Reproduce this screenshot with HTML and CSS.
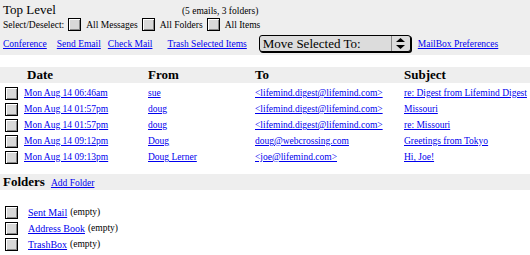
FILE: index.html
```html
<!DOCTYPE html>
<html lang="en">
<head>
    <meta charset="UTF-8">
    <title>Top Level</title>
    <link rel="stylesheet" href="styles.css">
</head>
<body>
    <div class="toolbar">
        <div class="title-row">
            <span class="title">Top Level</span>
            <span class="count">(5 emails, 3 folders)</span>
        </div>
        <div class="select-row">
            <span>Select/Deselect:</span>
            <input type="checkbox" class="box"><span>All Messages</span>
            <input type="checkbox" class="box"><span>All Folders</span>
            <input type="checkbox" class="box"><span>All Items</span>
        </div>
        <div class="action-row">
            <a href="#" class="conf">Conference</a>
            <a href="#" class="send">Send Email</a>
            <a href="#" class="check">Check Mail</a>
            <a href="#" class="trash">Trash Selected Items</a>
            <div class="move-select">
                <span class="label">Move Selected To:</span>
                <span class="arrows">
                    <svg width="9" height="11" viewBox="0 0 9 11"><path d="M4.5 0 L9 4 L0 4 Z M0 7 L9 7 L4.5 11 Z" fill="#000"/></svg>
                </span>
            </div>
            <a href="#">MailBox Preferences</a>
        </div>
    </div>

    <table class="messages">
        <thead>
            <tr>
                <th class="c-box"></th>
                <th class="c-date">Date</th>
                <th class="c-from">From</th>
                <th class="c-to">To</th>
                <th class="c-subj">Subject</th>
            </tr>
        </thead>
        <tbody>
            <tr>
                <td><input type="checkbox" class="box"></td>
                <td><a href="#">Mon Aug 14 06:46am</a></td>
                <td><a href="#">sue</a></td>
                <td><a href="#">&lt;lifemind.digest@lifemind.com&gt;</a></td>
                <td><a href="#">re: Digest from Lifemind Digest</a></td>
            </tr>
            <tr>
                <td><input type="checkbox" class="box"></td>
                <td><a href="#">Mon Aug 14 01:57pm</a></td>
                <td><a href="#">doug</a></td>
                <td><a href="#">&lt;lifemind.digest@lifemind.com&gt;</a></td>
                <td><a href="#">Missouri</a></td>
            </tr>
            <tr>
                <td><input type="checkbox" class="box"></td>
                <td><a href="#">Mon Aug 14 01:57pm</a></td>
                <td><a href="#">doug</a></td>
                <td><a href="#">&lt;lifemind.digest@lifemind.com&gt;</a></td>
                <td><a href="#">re: Missouri</a></td>
            </tr>
            <tr>
                <td><input type="checkbox" class="box"></td>
                <td><a href="#">Mon Aug 14 09:12pm</a></td>
                <td><a href="#">Doug</a></td>
                <td><a href="#">doug@webcrossing.com</a></td>
                <td><a href="#">Greetings from Tokyo</a></td>
            </tr>
            <tr>
                <td><input type="checkbox" class="box"></td>
                <td><a href="#">Mon Aug 14 09:13pm</a></td>
                <td><a href="#">Doug Lerner</a></td>
                <td><a href="#">&lt;joe@lifemind.com&gt;</a></td>
                <td><a href="#">Hi, Joe!</a></td>
            </tr>
        </tbody>
    </table>

    <div class="folders-bar">
        <span class="folders-title">Folders</span>
        <a href="#">Add Folder</a>
    </div>

    <div class="folders">
        <div class="folder"><input type="checkbox" class="box"><a href="#">Sent Mail</a><span class="empty">(empty)</span></div>
        <div class="folder"><input type="checkbox" class="box"><a href="#">Address Book</a><span class="empty">(empty)</span></div>
        <div class="folder"><input type="checkbox" class="box"><a href="#">TrashBox</a><span class="empty">(empty)</span></div>
    </div>
</body>
</html>
```

FILE: styles.css
```css
body {
    margin: 0;
    font-family: 'Liberation Serif', serif;
    font-size: 9.5px;
    color: #000;
    background: #fff;
}
a {
    color: #0000ee;
    white-space: nowrap;
}
.box {
    appearance: none;
    -webkit-appearance: none;
    width: 13px;
    height: 13px;
    margin: 0;
    border: 1px solid #000;
    background: #d8d8d8;
    box-shadow: inset 1px 1px #fff, inset -1px -1px #888;
    vertical-align: middle;
}
.toolbar {
    background: #eeeeee;
    height: 55px;
    padding: 0 3px;
    box-sizing: border-box;
}
.title-row {
    display: flex;
    align-items: baseline;
    height: 17px;
}
.title {
    font-size: 13px;
    padding-top: 2px;
}
.count {
    margin-left: 126px;
}
.select-row {
    display: flex;
    align-items: center;
    height: 15px;
    white-space: nowrap;
}
.select-row .box {
    margin: 0 5px 0 4px;
}
.action-row {
    display: flex;
    align-items: center;
    height: 21px;
    margin-top: 1px;
}
.action-row .conf { margin-right: 10px; }
.action-row .send { margin-right: 7px; }
.action-row .check { margin-right: 15px; }
.action-row .trash { margin-right: 12px; }
.move-select {
    display: flex;
    align-items: stretch;
    width: 152px;
    height: 17px;
    border: 1px solid #000;
    border-radius: 3px;
    box-shadow: 1px 1px 0 #000;
    background: #dcdcdc;
    font-size: 13px;
    margin-right: 7px;
    box-sizing: border-box;
}
.move-select .label {
    flex: 1;
    padding-left: 3px;
    line-height: 15px;
    white-space: nowrap;
}
.move-select .arrows {
    width: 18px;
    border-left: 1px solid #888;
    display: flex;
    align-items: center;
    justify-content: center;
}
.messages {
    margin-top: 12px;
    width: 100%;
    border-collapse: collapse;
    table-layout: fixed;
}
.messages th {
    background: #eeeeee;
    text-align: left;
    font-size: 13px;
    height: 16px;
    padding: 0;
    font-weight: bold;
}
.messages .c-box { width: 24px; }
.messages .c-date { width: 124px; padding-left: 3px; box-sizing: border-box; }
.messages .c-from { width: 107px; }
.messages .c-to { width: 149px; }
.messages td {
    height: 16px;
    padding: 0;
    white-space: nowrap;
    overflow: hidden;
}
.messages td:first-child {
    padding-left: 5px;
}
.messages tbody tr:first-child td {
    padding-top: 2px;
}
.folders-bar {
    background: #eeeeee;
    height: 16px;
    margin-top: 9px;
    padding-left: 3px;
    display: flex;
    align-items: baseline;
    gap: 6px;
}
.folders-title {
    font-size: 13px;
    font-weight: bold;
}
.folders {
    padding: 14px 0 0 5px;
}
.folder {
    display: flex;
    align-items: center;
    height: 16px;
    font-size: 10px;
}
.folder a {
    margin-left: 10px;
}
.folder .empty {
    margin-left: 3px;
    font-size: 9.5px;
}
```
